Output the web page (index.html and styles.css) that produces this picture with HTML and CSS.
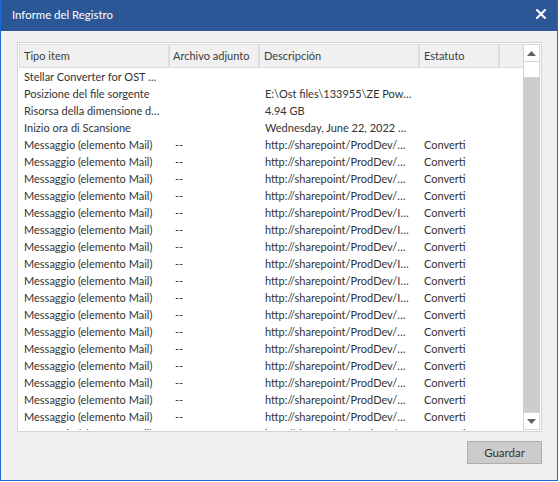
FILE: index.html
```html
<!DOCTYPE html>
<html lang="es">
<head>
<meta charset="utf-8">
<title>Informe del Registro</title>
<link rel="stylesheet" href="styles.css">
</head>
<body>
<div class="window">
  <div class="titlebar">
    <span class="title">Informe del Registro</span>
    <svg class="close" width="10" height="10" viewBox="0 0 10 10"><path d="M1 1L9 9M9 1L1 9" stroke="#fff" stroke-width="2" stroke-linecap="square"/></svg>
  </div>
  <div class="content">
    <div class="list">
      <div class="table">
        <div class="row head">
          <div class="c c1">Tipo item</div>
          <div class="c c2">Archivo adjunto</div>
          <div class="c c3">Descripción</div>
          <div class="c c4">Estatuto</div>
          <div class="c c5"></div>
        </div>
        <div class="rows">
          <div class="row"><div class="c c1">Stellar Converter for OST …</div><div class="c c2"></div><div class="c c3"></div><div class="c c4"></div></div>
          <div class="row"><div class="c c1">Posizione del file sorgente</div><div class="c c2"></div><div class="c c3">E:\Ost files\133955\ZE Pow…</div><div class="c c4"></div></div>
          <div class="row"><div class="c c1">Risorsa della dimensione d…</div><div class="c c2"></div><div class="c c3">4.94 GB</div><div class="c c4"></div></div>
          <div class="row"><div class="c c1">Inizio ora di Scansione</div><div class="c c2"></div><div class="c c3">Wednesday, June 22, 2022 …</div><div class="c c4"></div></div>
          <div class="row"><div class="c c1">Messaggio (elemento Mail)</div><div class="c c2">--</div><div class="c c3">http://sharepoint/ProdDev/…</div><div class="c c4">Converti</div></div>
          <div class="row"><div class="c c1">Messaggio (elemento Mail)</div><div class="c c2">--</div><div class="c c3">http://sharepoint/ProdDev/…</div><div class="c c4">Converti</div></div>
          <div class="row"><div class="c c1">Messaggio (elemento Mail)</div><div class="c c2">--</div><div class="c c3">http://sharepoint/ProdDev/…</div><div class="c c4">Converti</div></div>
          <div class="row"><div class="c c1">Messaggio (elemento Mail)</div><div class="c c2">--</div><div class="c c3">http://sharepoint/ProdDev/…</div><div class="c c4">Converti</div></div>
          <div class="row"><div class="c c1">Messaggio (elemento Mail)</div><div class="c c2">--</div><div class="c c3">http://sharepoint/ProdDev/I…</div><div class="c c4">Converti</div></div>
          <div class="row"><div class="c c1">Messaggio (elemento Mail)</div><div class="c c2">--</div><div class="c c3">http://sharepoint/ProdDev/I…</div><div class="c c4">Converti</div></div>
          <div class="row"><div class="c c1">Messaggio (elemento Mail)</div><div class="c c2">--</div><div class="c c3">http://sharepoint/ProdDev/…</div><div class="c c4">Converti</div></div>
          <div class="row"><div class="c c1">Messaggio (elemento Mail)</div><div class="c c2">--</div><div class="c c3">http://sharepoint/ProdDev/I…</div><div class="c c4">Converti</div></div>
          <div class="row"><div class="c c1">Messaggio (elemento Mail)</div><div class="c c2">--</div><div class="c c3">http://sharepoint/ProdDev/I…</div><div class="c c4">Converti</div></div>
          <div class="row"><div class="c c1">Messaggio (elemento Mail)</div><div class="c c2">--</div><div class="c c3">http://sharepoint/ProdDev/I…</div><div class="c c4">Converti</div></div>
          <div class="row"><div class="c c1">Messaggio (elemento Mail)</div><div class="c c2">--</div><div class="c c3">http://sharepoint/ProdDev/…</div><div class="c c4">Converti</div></div>
          <div class="row"><div class="c c1">Messaggio (elemento Mail)</div><div class="c c2">--</div><div class="c c3">http://sharepoint/ProdDev/…</div><div class="c c4">Converti</div></div>
          <div class="row"><div class="c c1">Messaggio (elemento Mail)</div><div class="c c2">--</div><div class="c c3">http://sharepoint/ProdDev/…</div><div class="c c4">Converti</div></div>
          <div class="row"><div class="c c1">Messaggio (elemento Mail)</div><div class="c c2">--</div><div class="c c3">http://sharepoint/ProdDev/…</div><div class="c c4">Converti</div></div>
          <div class="row"><div class="c c1">Messaggio (elemento Mail)</div><div class="c c2">--</div><div class="c c3">http://sharepoint/ProdDev/…</div><div class="c c4">Converti</div></div>
          <div class="row"><div class="c c1">Messaggio (elemento Mail)</div><div class="c c2">--</div><div class="c c3">http://sharepoint/ProdDev/…</div><div class="c c4">Converti</div></div>
          <div class="row"><div class="c c1">Messaggio (elemento Mail)</div><div class="c c2">--</div><div class="c c3">http://sharepoint/ProdDev/…</div><div class="c c4">Converti</div></div>
          <div class="row"><div class="c c1">Messaggio (elemento Mail)</div><div class="c c2">--</div><div class="c c3">http://sharepoint/ProdDev/…</div><div class="c c4">Converti</div></div>
        </div>
      </div>
      <div class="scrollbar">
        <div class="sb-btn"><svg width="9" height="5" viewBox="0 0 9 5"><path d="M0 5L4.5 0L9 5Z" fill="#606060"/></svg></div>
        <div class="sb-thumb"></div>
        <div class="sb-track"></div>
        <div class="sb-btn"><svg width="9" height="5" viewBox="0 0 9 5"><path d="M0 0L4.5 5L9 0Z" fill="#606060"/></svg></div>
      </div>
    </div>
    <div class="actions">
      <button class="btn">Guardar</button>
    </div>
  </div>
</div>
</body>
</html>
```

FILE: styles.css
```css
* { box-sizing: border-box; }
html, body { margin: 0; padding: 0; }
body {
  background: #ffffff;
  font-family: Lato, "Noto Sans", sans-serif;
  font-size: 11px;
  color: #333333;
  width: 560px;
  height: 482px;
  overflow: hidden;
}
.window {
  width: 558px;
  height: 481px;
  background: #f0f0f0;
  border-left: 1px solid #1a6ad8;
  border-right: 1px solid #1a6ad8;
  border-bottom: 1px solid #1a6ad8;
  display: flex;
  flex-direction: column;
}
.titlebar {
  height: 31px;
  background: #2b5797;
  display: flex;
  align-items: center;
  justify-content: space-between;
  padding: 0 11px 3px 11px;
  flex-shrink: 0;
}
.title {
  color: #ffffff;
  font-size: 11.4px;
}
.close { display: block; }
.content {
  padding: 11px 15px 0 16px;
  display: flex;
  flex-direction: column;
}
.list {
  height: 390px;
  border: 1px solid #d4d4d4;
  padding: 1px;
  background: #ffffff;
  display: flex;
  overflow: hidden;
}
.table {
  flex: 1;
  display: flex;
  flex-direction: column;
  overflow: hidden;
}
.row {
  display: flex;
  height: 17px;
  line-height: 17px;
  white-space: nowrap;
  flex-shrink: 0;
}
.row.head {
  height: 24px;
  line-height: 22px;
  background: #f0f0f0;
  border: 1px solid #dcdcdc;
  border-right: none;
  color: #3c3c3c;
}
.rows {
  overflow: hidden;
  flex: 1;
}
.c { overflow: hidden; }
.c1 { width: 151px; padding-left: 5px; }
.c2 { width: 90px; padding-left: 5px; }
.c3 { width: 160px; padding-left: 5px; }
.c4 { width: 80px; padding-left: 4px; }
.c5 { flex: 1; }
.head .c1 { width: 150px; padding-left: 4px; }
.head .c { border-right: 2px solid #dcdcdc; }
.head .c2 { padding-left: 3px; }
.head .c3 { padding-left: 4px; }
.head .c4 { padding-left: 4px; }
.head .c5 { border-right: none; }
.scrollbar {
  width: 17px;
  display: flex;
  flex-direction: column;
  background: #cdcdcd;
}
.sb-btn {
  height: 18px;
  background: #ffffff;
  border: 1px solid #d4d4d4;
  display: flex;
  align-items: center;
  justify-content: center;
}
.sb-thumb {
  height: 16px;
  background: #ffffff;
  border: 1px solid #d4d4d4;
  border-top: none;
}
.sb-track { flex: 1; }
.actions {
  display: flex;
  justify-content: flex-end;
  margin-top: 9px;
}
.btn {
  width: 75px;
  height: 23px;
  background: #cccccc;
  border: 1px solid #adadad;
  font-family: inherit;
  font-size: 11.5px;
  color: #333333;
  padding: 0;
}
```
